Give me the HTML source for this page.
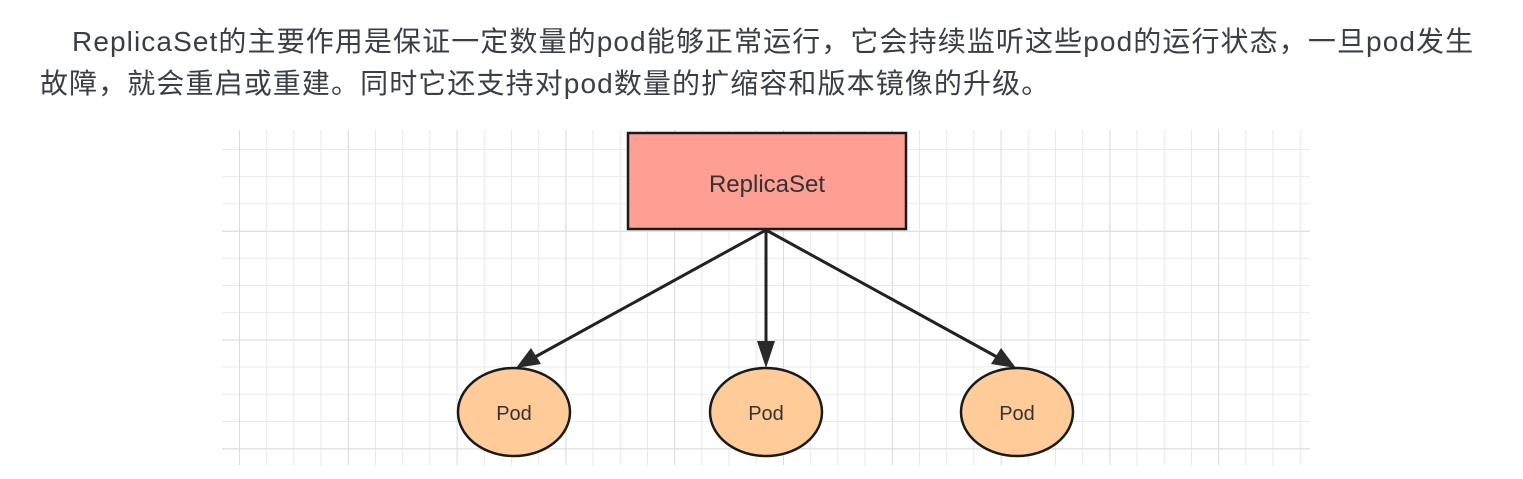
<!DOCTYPE html>
<html><head><meta charset="utf-8"><style>
body{margin:0;width:1523px;height:479px;background:#fff;overflow:hidden;position:relative}
.t{position:absolute;font-family:"Liberation Sans","Noto Sans CJK SC",sans-serif;font-size:28px;color:#3a3f45;letter-spacing:1.1px;white-space:nowrap}
</style></head><body>
<div class="t" style="left:72px;top:20px">ReplicaSet的主要作用是保证一定数量的pod能够正常运行，它会持续监听这些pod的运行状态，一旦pod发生</div>
<div class="t" style="left:40px;top:62px">故障，就会重启或重建。同时它还支持对pod数量的扩缩容和版本镜像的升级。</div>
<svg width="1523" height="479" style="position:absolute;left:0;top:0">
<defs>
<pattern id="g" x="239" y="149" width="27.2" height="27.2" patternUnits="userSpaceOnUse">
<path d="M0 0V27.2M0 0H27.2" stroke="#e4e4e4" stroke-width="1.6" fill="none"/>
</pattern>
<pattern id="G" x="239" y="122" width="108.8" height="108.8" patternUnits="userSpaceOnUse">
<path d="M0 0V108.8M0 0H108.8" stroke="#dcdcdc" stroke-width="2" fill="none"/>
</pattern>
</defs>
<rect x="222" y="130" width="1088" height="335" fill="url(#g)"/>
<rect x="222" y="130" width="1088" height="335" fill="url(#G)"/>
<rect x="628" y="133" width="278" height="96" fill="#ff9f94" stroke="#1a1a1a" stroke-width="2.5"/>
<text x="767" y="192" font-family="Liberation Sans,sans-serif" font-size="24" fill="#333" text-anchor="middle">ReplicaSet</text>
<g stroke="#222" stroke-width="3">
<line x1="766" y1="230" x2="535" y2="357"/>
<line x1="766" y1="230" x2="766" y2="348"/>
<line x1="766" y1="230" x2="997" y2="357"/>
</g>
<g fill="#2a2a2a">
<polygon points="516,368 531,348 541,364"/>
<polygon points="766,368 757,341 775,341"/>
<polygon points="1016,368 991,364 1001,348"/>
</g>
<g fill="#ffcc99" stroke="#1a1a1a" stroke-width="2.5">
<ellipse cx="514" cy="412" rx="56" ry="44"/>
<ellipse cx="766" cy="412" rx="56" ry="44"/>
<ellipse cx="1017" cy="412" rx="56" ry="44"/>
</g>
<g font-family="Liberation Sans,sans-serif" font-size="20" fill="#333" text-anchor="middle">
<text x="514" y="420">Pod</text><text x="766" y="420">Pod</text><text x="1017" y="420">Pod</text>
</g>
</svg>
</body></html>
